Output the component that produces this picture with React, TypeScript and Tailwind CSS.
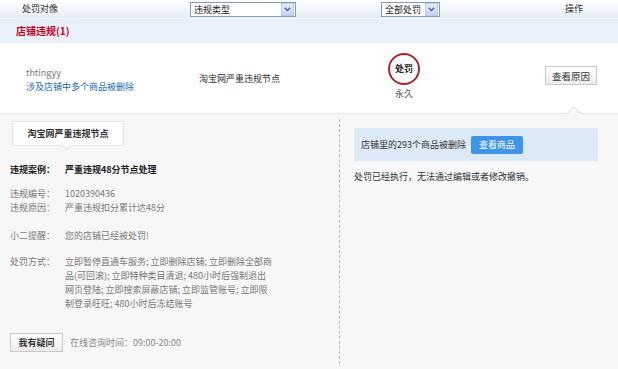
import React from "react";

const font = { fontFamily: '"Noto Sans CJK SC", "Liberation Sans", sans-serif' };

function Select({ label, w }: { label: string; w: string }) {
  return (
    <div className={`${w} h-[15px] border border-[#7f9db9] bg-white flex items-center justify-between`}>
      <span className="pl-[3px] text-[9px] leading-none text-[#222]">{label}</span>
      <span className="w-[13px] h-[13px] mr-[1px] bg-gradient-to-b from-[#e6eefc] to-[#c1d3fb] border border-[#b7cbf5] flex items-center justify-center">
        <svg width="7" height="5" viewBox="0 0 7 5">
          <path d="M0.8 0.8 L3.5 3.6 L6.2 0.8" fill="none" stroke="#4d6185" strokeWidth="1.4" />
        </svg>
      </span>
    </div>
  );
}

function Row({ label, children, bold = false }: { label: string; children: React.ReactNode; bold?: boolean }) {
  return (
    <div className="flex">
      <div className={`w-[55px] shrink-0 ${bold ? "font-bold text-[#222]" : "text-[#777]"}`}>{label}</div>
      <div className={bold ? "font-bold text-[#222]" : "text-[#777]"}>{children}</div>
    </div>
  );
}

export default function App() {
  return (
    <div className="w-[618px] h-[369px] bg-white overflow-hidden flex flex-col text-[9px] leading-[14px]" style={font}>
      {/* header */}
      <div className="h-[18px] shrink-0 flex items-center bg-gradient-to-b from-white to-[#e4ecf6] text-[#333]">
        <div className="w-[190px] pl-[22px]">处罚对像</div>
        <Select label="违规类型" w="w-[106px]" />
        <div className="w-[85px]" />
        <Select label="全部处罚" w="w-[59px]" />
        <div className="w-[125px]" />
        <div>操作</div>
      </div>
      {/* title bar */}
      <div className="h-[26px] shrink-0 flex items-center bg-[#e9f0f9] border-t border-[#f4f7fc] border-b border-[#c8d6e8] pl-[16px]">
        <span className="text-[#c8001e] font-bold text-[10px]">店铺违规(1)</span>
      </div>
      {/* row */}
      <div className="h-[69px] shrink-0 flex items-center bg-white">
        <div className="w-[199px] pl-[26px] flex flex-col pt-[2px]">
          <span className="text-[#777]">thtingyy</span>
          <span className="text-[#1b6bb5]">涉及店铺中多个商品被删除</span>
        </div>
        <div className="w-[172px] text-[#333]">淘宝网严重违规节点</div>
        <div className="w-[66px] flex flex-col items-center -mt-[4px]">
          <div className="w-[32px] h-[32px] rounded-full border-2 border-[#b5232a] flex items-center justify-center font-bold text-[#222]">
            处罚
          </div>
          <span className="text-[#555] mt-[2px]">永久</span>
        </div>
        <div className="w-[108px]" />
        <div className="w-[52px] h-[19px] border border-[#c9c9c9] bg-gradient-to-b from-white to-[#ececec] flex items-center justify-center text-[#333] text-[9.5px] -mt-[6px]">
          查看原因
        </div>
      </div>
      {/* panel */}
      <div className="relative flex-1 bg-[#f7f7f7] border-t border-[#e3e3e3] flex">
        <div className="absolute -top-[6px] left-[569px] w-[10px] h-[10px] rotate-45 bg-[#f7f7f7] border-l border-t border-[#e3e3e3]" />
        <div className="w-[339px] shrink-0 pl-[10px] pt-[7px] flex flex-col">
          <div className="relative ml-[2px] w-[112px] h-[25px] bg-white border border-[#e2e2e2] flex items-center justify-center font-bold text-[#333]">
            淘宝网严重违规节点
            <div className="absolute -bottom-[4px] left-[50px] w-[7px] h-[7px] rotate-45 bg-white border-r border-b border-[#e2e2e2]" />
          </div>
          <div className="mt-[17px]">
            <Row label="违规案例：" bold>
              严重违规48分节点处理
            </Row>
          </div>
          <div className="mt-[10px]">
            <Row label="违规编号：">1020390436</Row>
            <Row label="违规原因：">严重违规扣分累计达48分</Row>
          </div>
          <div className="mt-[14px]">
            <Row label="小二提醒：">您的店铺已经被处罚!</Row>
          </div>
          <div className="mt-[12px] flex">
            <div className="w-[55px] shrink-0 text-[#777]">处罚方式：</div>
            <div className="w-[230px] text-[#777]">
              立即暂停直通车服务; 立即删除店铺; 立即删除全部商
              <br />
              品(可回滚); 立即特种类目清退; 480小时后强制退出
              <br />
              网页登陆; 立即搜索屏蔽店铺; 立即监管账号; 立即限
              <br />
              制登录旺旺; 480小时后冻结账号
            </div>
          </div>
          <div className="mt-[22px] flex items-center">
            <div className="w-[53px] h-[19px] border border-[#c9c9c9] bg-gradient-to-b from-white to-[#ececec] flex items-center justify-center font-bold text-[#333]">
              我有疑问
            </div>
            <span className="ml-[7px] text-[#888]">在线咨询时间：09:00-20:00</span>
          </div>
        </div>
        <div className="flex-1 my-[5px] border-l border-dashed border-[#b9b9b9] pl-[14px] pt-[9px] pr-[20px]">
          <div className="h-[33px] bg-[#dceaf7] flex items-center pl-[7px]">
            <span className="text-[#333]">店铺里的293个商品被删除</span>
            <div className="ml-[5px] w-[52px] h-[18px] rounded-[2px] bg-[#3e94e6] flex items-center justify-center text-white">
              查看商品
            </div>
          </div>
          <div className="mt-[9px] text-[#333]">处罚已经执行，无法通过编辑或者修改撤销。</div>
        </div>
      </div>
    </div>
  );
}
